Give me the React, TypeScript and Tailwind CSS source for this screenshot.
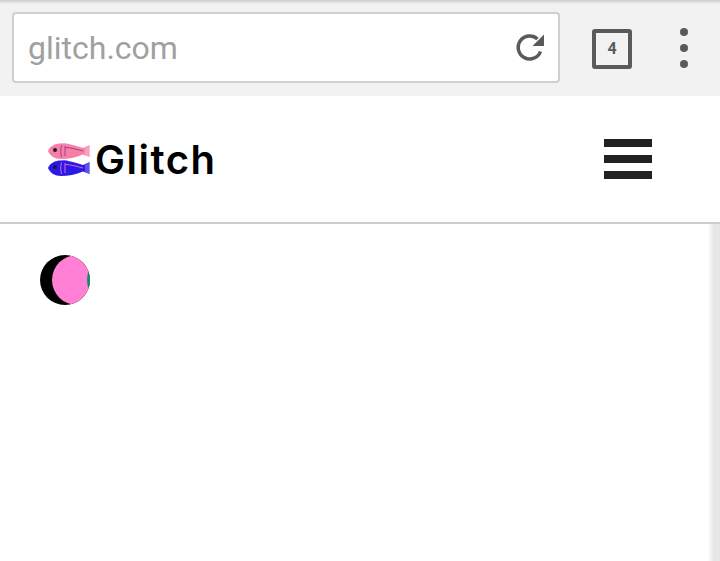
import React from 'react';

const Fish: React.FC<{ body: string; fin: string; line: string }> = ({ body, fin, line }) => (
  <svg width="42" height="16" viewBox="0 0 42 16" className="block">
    <path d="M12 1L18 0L27 3L30 7L12 5Z" fill={fin} />
    <path d="M0 8C2 3 7 0.500 13 0.500C21 0.500 29 3 35 5L41.500 2V14L35 11.500C28 14.500 20 16 13 16C7 16 2 13 0 8Z" fill={body} />
    <path d="M37 4.500L41.500 2V14L37 12Z" fill={fin} opacity="0.5" />
    <circle cx="7" cy="7" r="2" fill="#1a1a2a" />
    <path d="M13.500 2.500C12.500 6 12.500 10 13.500 14M17 3V13M17 4.500C23 4.500 29 6.500 35 8" stroke={line} strokeWidth="1" fill="none" />
  </svg>
);

const TopBar: React.FC = () => (
  <div className="h-24 flex flex-col bg-[#f2f2f2]">
    <div className="h-1 bg-gradient-to-b from-[#cdcdcd] to-[#f0f0f0]" />
    <div className="flex-1 flex items-center pl-3 pr-[32px]">
      <div className="w-[548px] h-[71px] mb-[5px] flex items-center justify-between bg-white border-2 border-[#cfcfcf] rounded-[4px] pl-[14px] pr-[11px]">
        <span className="font-['Roboto',sans-serif] text-[32px] text-[#a0a0a0]">glitch.com</span>
        <svg width="32" height="32" viewBox="0 0 32 32" className="mt-[1px]">
          <path d="M25.500 19.500A11.500 11.500 0 1 1 22.500 7" fill="none" stroke="#5a5a5a" strokeWidth="3.500" />
          <path d="M29 2.500V14H17.500Z" fill="#5a5a5a" />
        </svg>
      </div>
      <div className="ml-[32px] w-10 h-10 mb-[3px] flex items-center justify-center border-[4px] border-[#5a5a5a] rounded-[3px]">
        <span className="font-['Roboto',sans-serif] text-[16px] font-bold text-[#5a5a5a]">4</span>
      </div>
      <div className="ml-auto mb-[4px] flex flex-col gap-[8px]">
        <div className="w-2 h-2 rounded-full bg-[#5a5a5a]" />
        <div className="w-2 h-2 rounded-full bg-[#5a5a5a]" />
        <div className="w-2 h-2 rounded-full bg-[#5a5a5a]" />
      </div>
    </div>
  </div>
);

const Header: React.FC = () => (
  <div className="h-[128px] flex items-center justify-between bg-white border-b-2 border-[#cccccc] pl-12 pr-[68px]">
    <div className="flex items-center gap-[5px]">
      <div className="flex flex-col gap-[1px]">
        <Fish body="#f77fa5" fin="#fbc4d4" line="#a83a9a" />
        <Fish body="#2a1ae8" fin="#8f88f4" line="#e060d0" />
      </div>
      <span className="mt-[2px] font-['Inter',sans-serif] text-[40px] leading-none font-semibold text-black tracking-[1.5px]">Glitch</span>
    </div>
    <div className="flex flex-col gap-2">
      <div className="w-12 h-2 bg-[#222222]" />
      <div className="w-12 h-2 bg-[#222222]" />
      <div className="w-12 h-2 bg-[#222222]" />
    </div>
  </div>
);

const App: React.FC = () => {
  return (
    <div className="w-[720px] h-[561px] flex flex-col bg-white overflow-hidden">
      <TopBar />
      <Header />
      <div className="flex-1 flex">
        <div className="flex-1 pl-10 pt-[31px]">
          <div className="w-[50px] h-[50px] rounded-full bg-black overflow-hidden flex">
            <div className="ml-[12px] w-[50px] h-[50px] shrink-0 rounded-full bg-[#ff80d5] flex overflow-hidden">
              <div className="ml-[35px] w-[50px] h-[50px] shrink-0 rounded-full bg-[#0f8a63]" />
            </div>
          </div>
        </div>
        <div className="w-3 bg-gradient-to-r from-white to-[#e6e6e6] to-50%" />
      </div>
    </div>
  );
};

export default App;
